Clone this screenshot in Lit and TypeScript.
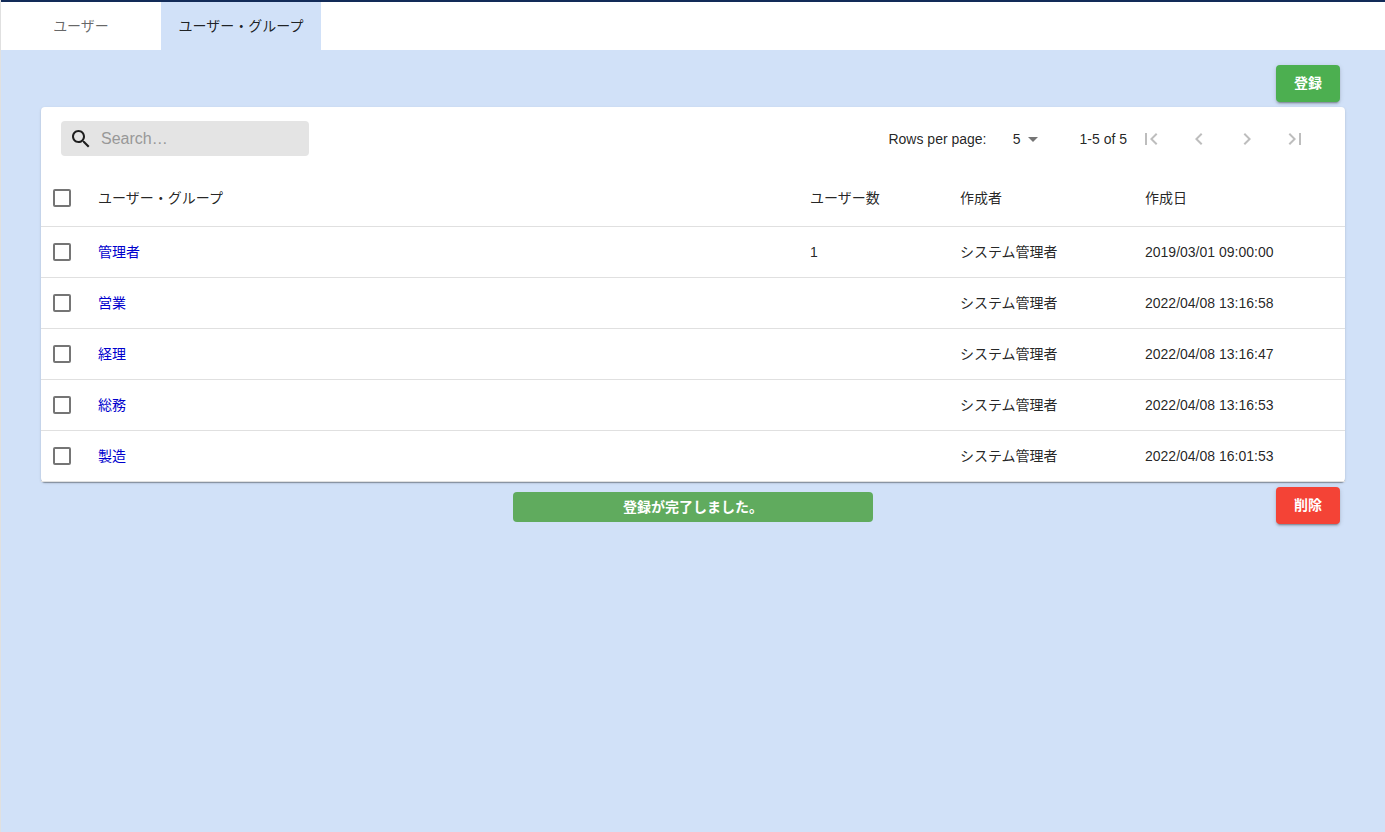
import { LitElement, html, css, svg } from "lit";
import { customElement, state } from "lit/decorators.js";
import { classMap } from "lit/directives/class-map.js";

interface Group {
  name: string;
  users: string;
  author: string;
  created: string;
}

const GROUPS: Group[] = [
  { name: "管理者", users: "1", author: "システム管理者", created: "2019/03/01 09:00:00" },
  { name: "営業", users: "", author: "システム管理者", created: "2022/04/08 13:16:58" },
  { name: "経理", users: "", author: "システム管理者", created: "2022/04/08 13:16:47" },
  { name: "総務", users: "", author: "システム管理者", created: "2022/04/08 13:16:53" },
  { name: "製造", users: "", author: "システム管理者", created: "2022/04/08 16:01:53" },
];

const TABS = ["ユーザー", "ユーザー・グループ"];

const PAGER = [
  { label: "First page", d: "M18.41 16.59L13.82 12l4.59-4.59L17 6l-6 6 6 6zM6 6h2v12H6z" },
  { label: "Previous page", d: "M15.41 7.41L14 6l-6 6 6 6 1.41-1.41L10.83 12z" },
  { label: "Next page", d: "M10 6L8.59 7.41 13.17 12l-4.58 4.59L10 18l6-6z" },
  { label: "Last page", d: "M5.59 7.41L10.18 12l-4.59 4.59L7 18l6-6-6-6zM16 6h2v12h-2z" },
];

const SEARCH =
  "M15.5 14h-.79l-.28-.27C15.41 12.59 16 11.11 16 9.5 16 5.91 13.09 3 9.5 3S3 5.91 3 9.5 5.91 16 9.5 16c1.61 0 3.09-.59 4.23-1.57l.27.28v.79l5 4.99L20.49 19l-4.99-5zm-6 0C7.01 14 5 11.99 5 9.5S7.01 5 9.5 5 14 7.01 14 9.5 11.99 14 9.5 14z";

const icon = (d: string) =>
  html`<svg class="icon" viewBox="0 0 24 24" aria-hidden="true">${svg`<path d=${d}></path>`}</svg>`;

@customElement("app-root")
export class AppRoot extends LitElement {
  @state() private activeTab = 1;

  static styles = css`
    :host {
      display: flex;
      flex-direction: column;
      box-sizing: border-box;
      min-height: 100vh;
      border-left: 1px solid #e0e0e0;
      background: #d1e1f8;
      color: rgba(0, 0, 0, 0.87);
      font: 14px/20px "Liberation Sans", "Noto Sans CJK JP", sans-serif;
    }
    * {
      box-sizing: border-box;
    }
    button,
    input,
    select {
      margin: 0;
      padding: 0;
      border: 0;
      background: none;
      color: inherit;
      font: inherit;
    }
    .icon {
      display: block;
      flex: none;
      width: 24px;
      height: 24px;
      fill: currentColor;
    }
    .tabs {
      display: flex;
      border-top: 2px solid #122b58;
      background: #fff;
    }
    .tab {
      width: 160px;
      height: 48px;
      color: rgba(0, 0, 0, 0.6);
      cursor: pointer;
    }
    .tab.active {
      background: #d1e1f8;
      color: rgba(0, 0, 0, 0.87);
    }
    main {
      padding: 15px 40px;
    }
    .actions {
      display: flex;
      justify-content: flex-end;
      padding: 0 5px 5px;
    }
    .button {
      min-width: 64px;
      height: 37px;
      padding: 0 16px 2px;
      border-radius: 4px;
      color: #fff;
      font-weight: 700;
      box-shadow: 0 3px 1px -2px rgba(0, 0, 0, 0.2), 0 2px 2px 0 rgba(0, 0, 0, 0.14),
        0 1px 5px 0 rgba(0, 0, 0, 0.12);
      cursor: pointer;
    }
    .create {
      background: #4caf50;
    }
    .delete {
      background: #f44336;
    }
    .card {
      border-radius: 4px;
      background: #fff;
      box-shadow: 0 2px 1px -1px rgba(0, 0, 0, 0.2), 0 1px 1px 0 rgba(0, 0, 0, 0.14),
        0 1px 3px 0 rgba(0, 0, 0, 0.12);
    }
    .toolbar {
      display: flex;
      align-items: center;
      justify-content: space-between;
      height: 63px;
      padding: 0 26px 0 20px;
    }
    .search {
      display: flex;
      align-items: center;
      gap: 8px;
      width: 248px;
      height: 35px;
      padding: 0 8px;
      border-radius: 4px;
      background: #e4e4e4;
    }
    .search input {
      flex: 1;
      min-width: 0;
      outline: 0;
      font-size: 16px;
    }
    .search input::placeholder {
      color: #989898;
      opacity: 1;
    }
    .pager {
      display: flex;
      align-items: center;
    }
    .size {
      display: grid;
      align-items: center;
      margin: 0 35px 0 2px;
    }
    .size select,
    .size .icon {
      grid-area: 1 / 1;
    }
    .size select {
      padding: 0 24px 0 16px;
      appearance: none;
      text-align-last: right;
    }
    .size .icon {
      justify-self: end;
      color: rgba(0, 0, 0, 0.54);
      pointer-events: none;
    }
    .step {
      display: grid;
      place-items: center;
      width: 48px;
      height: 48px;
      color: rgba(0, 0, 0, 0.26);
    }
    table {
      width: 100%;
      border-collapse: separate;
      border-spacing: 0;
      table-layout: fixed;
    }
    th,
    td {
      height: 51px;
      padding: 0;
      border-bottom: 1px solid #e0e0e0;
      text-align: left;
      font-weight: 400;
    }
    th {
      height: 57px;
    }
    .col-check {
      width: 57px;
    }
    .col-users {
      width: 150px;
    }
    .col-author {
      width: 185px;
    }
    .col-created {
      width: 200px;
    }
    .check {
      display: block;
      width: 18px;
      height: 18px;
      margin-left: 12px;
      border: 2px solid #757575;
      border-radius: 2px;
      appearance: none;
    }
    .check:checked {
      background: #757575;
    }
    td a {
      color: #0000cd;
      text-decoration: none;
    }
    .footer {
      display: grid;
      grid-template-columns: 1fr 360px 1fr;
      align-items: center;
      padding: 5px 5px 0;
    }
    .toast {
      grid-column: 2;
      height: 30px;
      margin-top: 3px;
      border-radius: 4px;
      background: #60ab5e;
      color: #fff;
      font-weight: 700;
      line-height: 30px;
      text-align: center;
    }
    .delete {
      justify-self: end;
    }
  `;

  render() {
    return html`
      <nav class="tabs" role="tablist">
        ${TABS.map(
          (label, i) => html`<button
            class=${classMap({ tab: true, active: i === this.activeTab })}
            role="tab"
            aria-selected=${i === this.activeTab}
            @click=${() => (this.activeTab = i)}
          >${label}</button>`
        )}
      </nav>
      <main>
        <div class="actions"><button class="button create">登録</button></div>
        <section class="card">
          <div class="toolbar">
            <label class="search">
              ${icon(SEARCH)}
              <input type="text" placeholder="Search…" aria-label="Search" />
            </label>
            <div class="pager">
              <label for="size">Rows per page:</label>
              <span class="size">
                <select id="size"><option>5</option><option>10</option></select>
                ${icon("M7 10l5 5 5-5z")}
              </span>
              <span>1-5 of 5</span>
              ${PAGER.map(
                (p) => html`<button class="step" disabled aria-label=${p.label}>${icon(p.d)}</button>`
              )}
            </div>
          </div>
          <table>
            <thead>
              <tr>
                <th class="col-check"><input class="check" type="checkbox" aria-label="Select all" /></th>
                <th>ユーザー・グループ</th>
                <th class="col-users">ユーザー数</th>
                <th class="col-author">作成者</th>
                <th class="col-created">作成日</th>
              </tr>
            </thead>
            <tbody>
              ${GROUPS.map(
                (g) => html`<tr>
                  <td><input class="check" type="checkbox" aria-label=${g.name} /></td>
                  <td><a href="#">${g.name}</a></td>
                  <td>${g.users}</td>
                  <td>${g.author}</td>
                  <td>${g.created}</td>
                </tr>`
              )}
            </tbody>
          </table>
        </section>
        <div class="footer">
          <div class="toast" role="status">登録が完了しました。</div>
          <button class="button delete">削除</button>
        </div>
      </main>
    `;
  }
}
